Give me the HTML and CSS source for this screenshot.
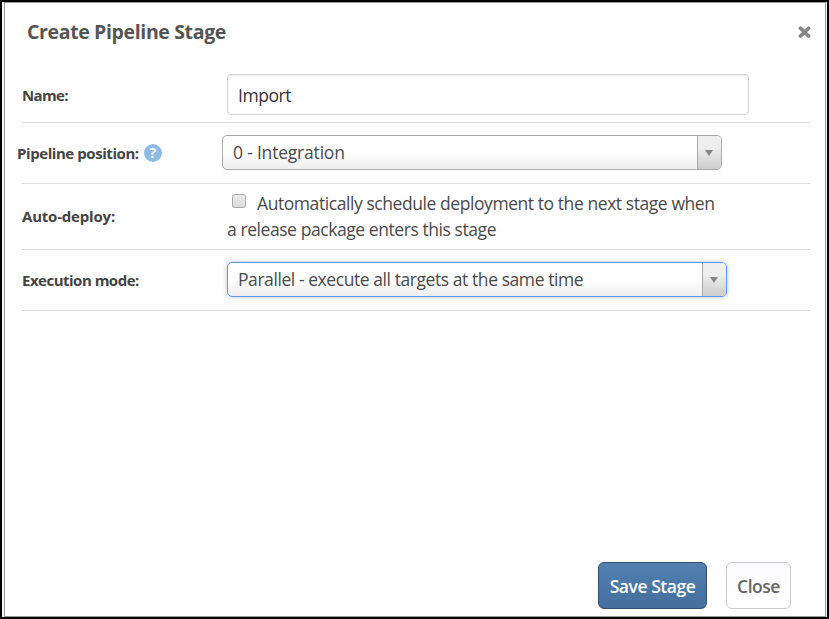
FILE: index.html
```html
<!DOCTYPE html>
<html lang="en">
<head>
<meta charset="utf-8">
<title>Create Pipeline Stage</title>
<link rel="stylesheet" href="styles.css">
</head>
<body>
<main class="dialog">
  <header class="head">
    <h1 class="title">Create Pipeline Stage</h1>
    <svg class="dismiss" width="13" height="12" viewBox="0 0 13 12"><path d="M2.5 2.2l8 7.8M10.5 2.2l-8 7.8" stroke="#858585" stroke-width="3.7" stroke-linecap="round"/></svg>
  </header>
  <form class="form">
    <div class="row row-name">
      <label class="label"><span class="t-name">Name:</span></label>
      <div class="input"><span>Import</span></div>
    </div>
    <div class="row row-position">
      <label class="label"><span class="t-position">Pipeline position:</span><span class="help">?</span></label>
      <div class="select"><span class="value t-integration">0 - Integration</span><span class="arrow"></span></div>
    </div>
    <div class="row row-auto">
      <label class="label"><span class="t-auto">Auto-deploy:</span></label>
      <div class="check-text">
        <div class="line"><span class="checkbox"></span><span>Automatically schedule deployment to the next stage when</span></div>
        <div class="line"><span>a release package enters this stage</span></div>
      </div>
    </div>
    <div class="row row-mode">
      <label class="label"><span class="t-mode">Execution mode:</span></label>
      <div class="select focused"><span class="value">Parallel - execute all targets at the same time</span><span class="arrow"></span></div>
    </div>
  </form>
  <footer class="actions">
    <button class="btn primary" type="button">Save Stage</button>
    <button class="btn" type="button">Close</button>
  </footer>
</main>
</body>
</html>
```
FILE: styles.css
```css
* { box-sizing: border-box; }
body {
  margin: 0;
  width: 829px;
  height: 619px;
  padding: 0 1px 0 2px;
  border: 2px solid #000;
  background: #f7f7f7;
  font: 17.5px/26px "Open Sans", "Noto Sans", sans-serif;
  letter-spacing: -.43px;
  color: #4a4a4a;
  overflow: hidden;
}
.dialog {
  display: flex;
  flex-direction: column;
  height: 615px;
  border: 1px solid #999;
  background: #fff;
  white-space: nowrap;
}
.head {
  display: flex;
  justify-content: space-between;
  align-items: center;
  height: 58px;
  padding: 0 14px 0 22px;
}
.title { margin: 0; font-size: 19.5px; font-weight: 700; color: #555; letter-spacing: -.36px; }
.form { margin: 0 15px 0 17px; }
.row {
  display: flex;
  align-items: center;
  border-bottom: 1px solid #dcdcdc;
}
.row-name { height: 62px; padding-top: 6px; }
.row-position { height: 61px; }
.row-auto { height: 66px; }
.row-mode { height: 61px; }
.label {
  display: flex;
  align-items: center;
  width: 205px;
  padding-bottom: 1px;
  font-size: 15px;
  font-weight: 700;
  color: #444;
}
.row-name .label { padding: 1px 0 0; }
.t-name { letter-spacing: -.65px; }
.t-position { letter-spacing: -.43px; }
.t-auto { letter-spacing: -.2px; }
.t-mode { letter-spacing: -.5px; }
.t-integration { letter-spacing: -.2px; }
.row-position .label { margin-left: -5px; }
.help {
  display: flex;
  align-items: center;
  justify-content: center;
  width: 18px;
  height: 18px;
  margin: 1px 0 0 5px;
  border-radius: 50%;
  background: #8bbce6;
  color: #fff;
  font-size: 14px;
  letter-spacing: 0;
}
.input {
  display: flex;
  align-items: center;
  width: 522px;
  height: 41px;
  padding: 0 10px;
  border: 1px solid #d0d3d6;
  border-radius: 4px;
  box-shadow: inset 0 1px 2px #eee;
  color: #333;
}
.select {
  display: flex;
  width: 500px;
  height: 35px;
  margin-bottom: 2px;
  border: 1px solid #aaa;
  border-radius: 5px;
  background: linear-gradient(#fff 50%, #eee) padding-box;
  overflow: hidden;
}
.focused { border-color: #5897fb; box-shadow: 0 0 5px rgba(0, 0, 0, .25); }
.value { flex: 1; padding-left: 10px; line-height: 33px; }
.arrow {
  display: flex;
  align-items: center;
  justify-content: center;
  width: 24px;
  padding: 2px 2px 0 0;
  border-left: 1px solid #aaa;
  background: linear-gradient(#eee 35%, #ccc);
}
.arrow::before {
  content: "";
  border: solid transparent;
  border-width: 6px 4px 0;
  border-top-color: #858585;
}
.check-text { padding-bottom: 2px; }
.line { display: flex; height: 26px; align-items: center; }
.checkbox {
  width: 14px;
  height: 14px;
  margin: -4px 11px 0 5px;
  border: 1px solid #aaa;
  border-radius: 3px;
  background: linear-gradient(#ececec, #dcdcdc);
}
.actions {
  display: flex;
  justify-content: flex-end;
  gap: 19px;
  margin: auto 34px 7px 0;
}
.btn {
  width: 65px;
  height: 47px;
  padding: 1px 0 0;
  border: 1px solid #ccc;
  border-radius: 6px;
  background: linear-gradient(#fbfbfd, #fff);
  color: #666;
  font: 600 17.5px/26px "Open Sans", "Noto Sans", sans-serif;
  letter-spacing: -.45px;
}
.primary {
  width: 109px;
  border-color: #34506d;
  background: linear-gradient(#5080b1, #456f9d);
  color: #fff;
}
```
